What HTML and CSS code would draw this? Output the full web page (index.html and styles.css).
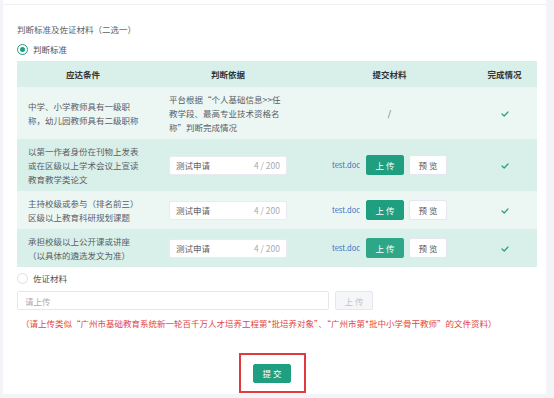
FILE: index.html
```html
<!DOCTYPE html>
<html lang="zh-CN">
<head>
    <meta charset="UTF-8">
    <meta name="viewport" content="width=device-width, initial-scale=1.0">
    <title>判断标准及佐证材料</title>
    <link rel="stylesheet" href="styles.css">
</head>
<body>
    <div class="page">
        <div class="panel">
            <div class="top-line"></div>
            <div class="section-title">判断标准及佐证材料（二选一）</div>

            <label class="radio-row">
                <span class="radio checked"></span>
                <span>判断标准</span>
            </label>

            <table class="criteria">
                <thead>
                    <tr>
                        <th class="col-cond">应达条件</th>
                        <th class="col-basis">判断依据</th>
                        <th class="col-file">提交材料</th>
                        <th class="col-state">完成情况</th>
                    </tr>
                </thead>
                <tbody>
                    <tr class="light">
                        <td class="col-cond">中学、小学教师具有一级职称，幼儿园教师具有二级职称</td>
                        <td class="col-basis">平台根据“个人基础信息&gt;&gt;任教学段、最高专业技术资格名称”判断完成情况</td>
                        <td class="col-file">/</td>
                        <td class="col-state"><svg class="check" width="8" height="6" viewBox="0 0 8 6"><polyline points="1,3 3.2,5 7,1"/></svg></td>
                    </tr>
                    <tr>
                        <td class="col-cond">以第一作者身份在刊物上发表或在区级以上学术会议上宣读教育教学类论文</td>
                        <td class="col-basis">
                            <div class="apply-input"><span>测试申请</span><span class="count">4 / 200</span></div>
                        </td>
                        <td class="col-file">
                            <div class="file-actions">
                                <a class="file-link" href="#">test.doc</a>
                                <button class="btn btn-green">上 传</button>
                                <button class="btn btn-plain">预 览</button>
                            </div>
                        </td>
                        <td class="col-state"><svg class="check" width="8" height="6" viewBox="0 0 8 6"><polyline points="1,3 3.2,5 7,1"/></svg></td>
                    </tr>
                    <tr class="light">
                        <td class="col-cond">主持校级或参与（排名前三）区级以上教育科研规划课题</td>
                        <td class="col-basis">
                            <div class="apply-input"><span>测试申请</span><span class="count">4 / 200</span></div>
                        </td>
                        <td class="col-file">
                            <div class="file-actions">
                                <a class="file-link" href="#">test.doc</a>
                                <button class="btn btn-green">上 传</button>
                                <button class="btn btn-plain">预 览</button>
                            </div>
                        </td>
                        <td class="col-state"><svg class="check" width="8" height="6" viewBox="0 0 8 6"><polyline points="1,3 3.2,5 7,1"/></svg></td>
                    </tr>
                    <tr>
                        <td class="col-cond">承担校级以上公开课或讲座（以具体的遴选发文为准）</td>
                        <td class="col-basis">
                            <div class="apply-input"><span>测试申请</span><span class="count">4 / 200</span></div>
                        </td>
                        <td class="col-file">
                            <div class="file-actions">
                                <a class="file-link" href="#">test.doc</a>
                                <button class="btn btn-green soft">上 传</button>
                                <button class="btn btn-plain">预 览</button>
                            </div>
                        </td>
                        <td class="col-state"><svg class="check" width="8" height="6" viewBox="0 0 8 6"><polyline points="1,3 3.2,5 7,1"/></svg></td>
                    </tr>
                </tbody>
            </table>

            <label class="radio-row second">
                <span class="radio"></span>
                <span>佐证材料</span>
            </label>

            <div class="upload-row">
                <div class="upload-input">请上传</div>
                <button class="btn btn-disabled">上 传</button>
            </div>

            <div class="upload-tip">（请上传类似“广州市基础教育系统新一轮百千万人才培养工程第*批培养对象”、“广州市第*批中小学骨干教师”的文件资料）</div>

            <div class="submit-area">
                <div class="submit-box">
                    <button class="btn btn-green submit">提 交</button>
                </div>
            </div>
        </div>
    </div>
</body>
</html>
```

FILE: styles.css
```css
body, html {
    margin: 0;
    padding: 0;
    height: 100%;
    background-color: #f3f4f7;
    font-family: "Noto Sans CJK SC", "Noto Sans", sans-serif;
    font-size: 8.5px;
    color: #5a5e66;
}
.page {
    height: 394px;
    padding: 0 8px 0 3px;
    overflow: hidden;
}
.panel {
    height: 100%;
    background-color: white;
    padding: 0 9px 0 14px;
    box-sizing: border-box;
}
.top-line {
    height: 4px;
    border-bottom: 1px solid #eef0f3;
    margin: 0 -9px 0 -14px;
}
.section-title {
    margin-top: 17px;
    line-height: 14px;
    color: #606266;
}
.radio-row {
    display: flex;
    align-items: center;
    gap: 5px;
    margin-top: 6px;
    line-height: 14px;
    color: #555;
}
.radio-row.second {
    margin-top: 4px;
}
.radio {
    width: 9px;
    height: 9px;
    border: 1px solid #dcdfe6;
    border-radius: 50%;
    display: flex;
    align-items: center;
    justify-content: center;
    background: white;
}
.radio.checked {
    border-color: #1f9e80;
}
.radio.checked::after {
    content: "";
    width: 5px;
    height: 5px;
    border-radius: 50%;
    background-color: #1f9e80;
}

/* table */
.criteria {
    width: 520px;
    margin-top: 5px;
    border-collapse: collapse;
    table-layout: fixed;
}
.criteria th {
    height: 26px;
    padding: 0;
    font-weight: bold;
    color: #333;
    background-color: #d9efe9;
    text-align: center;
}
.criteria td {
    padding: 5px 0;
    line-height: 14px;
    background-color: #d9efe9;
    vertical-align: middle;
}
.criteria tr.light td {
    background-color: #ecf7f4;
}
.col-cond { width: 132px; }
.col-basis { width: 158px; }
.col-file { width: 165px; }
.col-state { width: 65px; }
.criteria td.col-cond {
    padding-left: 11px;
    padding-right: 8px;
}
.criteria td.col-basis {
    padding-left: 20px;
    padding-right: 20px;
}
.criteria td.col-file,
.criteria td.col-state {
    text-align: center;
}
.check {
    fill: none;
    stroke: #2a9d7f;
    stroke-width: 1.2;
    stroke-linecap: round;
    stroke-linejoin: round;
}
.apply-input {
    height: 19px;
    display: flex;
    align-items: center;
    justify-content: space-between;
    padding: 0 6px;
    background: white;
    border: 1px solid #e8ebef;
    border-radius: 2px;
    box-sizing: border-box;
    color: #606266;
}
.apply-input .count {
    color: #a8abb2;
}
.file-actions {
    display: flex;
    align-items: center;
    justify-content: center;
    gap: 5px;
}
.file-link {
    color: #3d6fc2;
    text-decoration: none;
    font-size: 7.5px;
    margin-right: 1px;
}
.btn {
    height: 20px;
    width: 38px;
    padding: 0;
    font-family: inherit;
    font-size: 8.5px;
    border-radius: 2px;
    cursor: pointer;
}
.btn-green {
    background-color: #1f9e80;
    border: 1px solid #1f9e80;
    color: white;
}
.btn-green.soft {
    background-color: #2ea788;
    border-color: #2ea788;
}
.btn-plain {
    background-color: white;
    border: 1px solid #e4e7ed;
    color: #555;
}

/* evidence upload */
.upload-row {
    display: flex;
    align-items: center;
    gap: 6px;
    margin-top: 6px;
}
.upload-input {
    width: 312px;
    height: 19px;
    padding-left: 7px;
    box-sizing: border-box;
    border: 1px solid #e4e7ed;
    border-radius: 2px;
    display: flex;
    align-items: center;
    color: #a8abb2;
}
.btn-disabled {
    height: 19px;
    background-color: #f5f6f7;
    border: 1px solid #e4e7ed;
    color: #c0c4cc;
}
.upload-tip {
    margin-top: 6px;
    padding-left: 4px;
    line-height: 14px;
    color: #e2463f;
    white-space: nowrap;
}
.submit-area {
    display: flex;
    justify-content: center;
    margin-top: 23px;
    padding-right: 10px;
}
.submit-box {
    width: 67px;
    height: 40px;
    border: 2px solid #e0393e;
    box-sizing: border-box;
    display: flex;
    align-items: center;
    justify-content: center;
}
.btn.submit {
    height: 19px;
    width: 38px;
}
```
